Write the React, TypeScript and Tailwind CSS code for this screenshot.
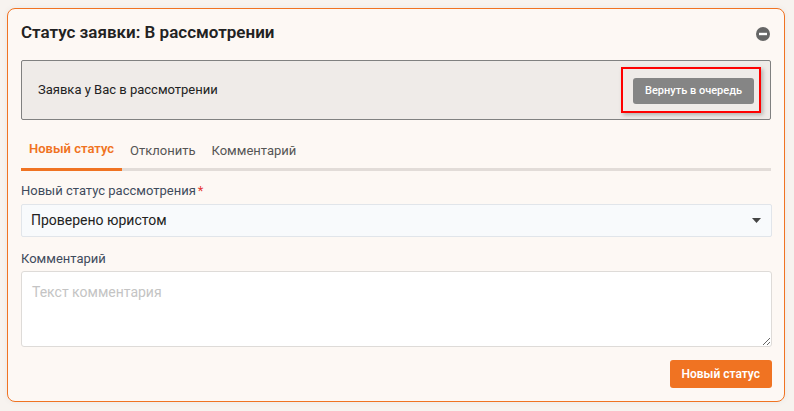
import { useState } from 'react';

const tabs = ['Новый статус', 'Отклонить', 'Комментарий'];

function MinusCircle() {
  return (
    <svg width="14" height="14" viewBox="0 0 14 14">
      <circle cx="7" cy="7" r="7" fill="#666" />
      <rect x="3" y="5.8" width="8" height="2.4" fill="#fff" />
    </svg>
  );
}

export default function App() {
  const [active, setActive] = useState(0);

  return (
    <div className="min-h-screen bg-[#f7f3ef] pt-[8px] pr-[9px] pb-[8px] pl-[7px] font-['Roboto',sans-serif]">
      <div className="rounded-[8px] border border-[#f07322] bg-[#fdf8f4] px-[13px] pt-[12px] pb-[13px] shadow-[0_0_6px_rgba(0,0,0,0.05)]">
        <div className="flex h-[22px] items-center justify-between">
          <h2 className="text-[17px] leading-[22px] font-semibold text-[#222]">Статус заявки: В рассмотрении</h2>
          <div className="pt-[3px] pr-[1px]">
            <MinusCircle />
          </div>
        </div>

        <div className="mt-[17px] flex h-[60px] items-center justify-between rounded-[2px] border border-[#808080] bg-[#efebe8] pr-[9px] pl-[16px]">
          <span className="text-[13px] text-[#222]">Заявка у Вас в рассмотрении</span>
          <div className="border-2 border-[#ff0000] pt-[8px] pr-[5px] pb-[7px] pl-[10px] shadow-[2px_2px_4px_rgba(0,0,0,0.25)]">
            <button className="h-[26px] rounded-[3px] bg-[#858585] px-[12px] text-[11px] font-medium text-white">
              Вернуть в очередь
            </button>
          </div>
        </div>

        <div className="mt-[19px] flex border-b-[3px] border-[#e2dcd8] text-[13px] leading-[19px]">
          {tabs.map((t, i) => (
            <button
              key={t}
              onClick={() => setActive(i)}
              className={
                i === active
                  ? 'mb-[-3px] border-b-[3px] border-[#f07322] px-[8px] pb-[10px] font-semibold text-[#f07322]'
                  : 'mb-[-3px] px-[8px] pb-[10px] text-[#555]'
              }
            >
              {t}
            </button>
          ))}
        </div>

        <div className="mt-[10px] text-[13px] leading-[19px] text-[#3f4b5c]">
          Новый статус рассмотрения<span className="ml-[2px] align-top text-[#e53935]">*</span>
        </div>
        <div className="mt-[4px] mr-[-1px] flex h-[33px] items-center justify-between rounded-[2px] border border-[#e1e5ea] bg-[#f8fafc] pr-[10px] pl-[9px]">
          <span className="text-[14px] text-[#222]">Проверено юристом</span>
          <svg width="9" height="5" viewBox="0 0 9 5">
            <path d="M0 0h9L4.5 5z" fill="#444" />
          </svg>
        </div>

        <div className="mt-[12px] text-[13px] leading-[19px] text-[#3f4b5c]">Комментарий</div>
        <textarea
          placeholder="Текст комментария"
          className="mt-[3px] block h-[76px] w-[calc(100%+1px)] rounded-[3px] border border-[#dedbd8] bg-white px-[10px] py-[10px] text-[14px] outline-none placeholder:text-[#c4c4c4]"
        />

        <div className="mt-[13px] mr-[-1px] flex justify-end">
          <button className="h-[28px] rounded-[3px] bg-[#f07322] px-[12px] text-[12px] font-semibold text-white">
            Новый статус
          </button>
        </div>
      </div>
    </div>
  );
}
